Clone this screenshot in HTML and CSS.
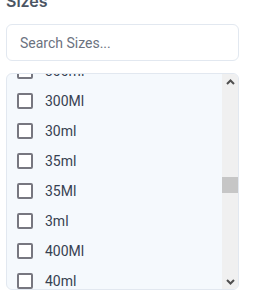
FILE: index.html
```html
<!DOCTYPE html>
<html>
<head>
<meta charset="utf-8">
<link rel="stylesheet" href="styles.css">
</head>
<body>
<div class="panel">
  <h3 class="title">Sizes</h3>
  <input class="search" type="text" placeholder="Search Sizes...">
  <div class="listbox">
    <ul class="list" id="list">
      <li class="row"><span class="box"></span><span class="label">0.5oz</span></li>
      <li class="row"><span class="box"></span><span class="label">1 Gallon</span></li>
      <li class="row"><span class="box"></span><span class="label">1 Liter</span></li>
      <li class="row"><span class="box"></span><span class="label">100g</span></li>
      <li class="row"><span class="box"></span><span class="label">100ml</span></li>
      <li class="row"><span class="box"></span><span class="label">100Ml</span></li>
      <li class="row"><span class="box"></span><span class="label">10g</span></li>
      <li class="row"><span class="box"></span><span class="label">10ml</span></li>
      <li class="row"><span class="box"></span><span class="label">10Ml</span></li>
      <li class="row"><span class="box"></span><span class="label">110ml</span></li>
      <li class="row"><span class="box"></span><span class="label">120ml</span></li>
      <li class="row"><span class="box"></span><span class="label">125ml</span></li>
      <li class="row"><span class="box"></span><span class="label">12ml</span></li>
      <li class="row"><span class="box"></span><span class="label">12oz</span></li>
      <li class="row"><span class="box"></span><span class="label">150g</span></li>
      <li class="row"><span class="box"></span><span class="label">150ml</span></li>
      <li class="row"><span class="box"></span><span class="label">150Ml</span></li>
      <li class="row"><span class="box"></span><span class="label">15ml</span></li>
      <li class="row"><span class="box"></span><span class="label">15Ml</span></li>
      <li class="row"><span class="box"></span><span class="label">16oz</span></li>
      <li class="row"><span class="box"></span><span class="label">180ml</span></li>
      <li class="row"><span class="box"></span><span class="label">1kg</span></li>
      <li class="row"><span class="box"></span><span class="label">1L</span></li>
      <li class="row"><span class="box"></span><span class="label">1oz</span></li>
      <li class="row"><span class="box"></span><span class="label">200g</span></li>
      <li class="row"><span class="box"></span><span class="label">200ml</span></li>
      <li class="row"><span class="box"></span><span class="label">200Ml</span></li>
      <li class="row"><span class="box"></span><span class="label">20ml</span></li>
      <li class="row"><span class="box"></span><span class="label">20Ml</span></li>
      <li class="row"><span class="box"></span><span class="label">250g</span></li>
      <li class="row"><span class="box"></span><span class="label">250ml</span></li>
      <li class="row"><span class="box"></span><span class="label">250Ml</span></li>
      <li class="row"><span class="box"></span><span class="label">25ml</span></li>
      <li class="row"><span class="box"></span><span class="label">2kg</span></li>
      <li class="row"><span class="box"></span><span class="label">2L</span></li>
      <li class="row"><span class="box"></span><span class="label">2ml</span></li>
      <li class="row"><span class="box"></span><span class="label">2oz</span></li>
      <li class="row"><span class="box"></span><span class="label">300g</span></li>
      <li class="row"><span class="box"></span><span class="label">300ml</span></li>
      <li class="row" id="anchor"><span class="box"></span><span class="label">300Ml</span></li>
      <li class="row"><span class="box"></span><span class="label">30ml</span></li>
      <li class="row"><span class="box"></span><span class="label">35ml</span></li>
      <li class="row"><span class="box"></span><span class="label">35Ml</span></li>
      <li class="row"><span class="box"></span><span class="label">3ml</span></li>
      <li class="row"><span class="box"></span><span class="label">400Ml</span></li>
      <li class="row"><span class="box"></span><span class="label">40ml</span></li>
      <li class="row"><span class="box"></span><span class="label">450ml</span></li>
      <li class="row"><span class="box"></span><span class="label">45ml</span></li>
      <li class="row"><span class="box"></span><span class="label">4oz</span></li>
      <li class="row"><span class="box"></span><span class="label">500g</span></li>
      <li class="row"><span class="box"></span><span class="label">500ml</span></li>
      <li class="row"><span class="box"></span><span class="label">500Ml</span></li>
      <li class="row"><span class="box"></span><span class="label">50ml</span></li>
      <li class="row"><span class="box"></span><span class="label">50Ml</span></li>
      <li class="row"><span class="box"></span><span class="label">5L</span></li>
      <li class="row"><span class="box"></span><span class="label">5ml</span></li>
      <li class="row"><span class="box"></span><span class="label">600ml</span></li>
      <li class="row"><span class="box"></span><span class="label">60ml</span></li>
      <li class="row"><span class="box"></span><span class="label">6oz</span></li>
      <li class="row"><span class="box"></span><span class="label">700ml</span></li>
      <li class="row"><span class="box"></span><span class="label">70ml</span></li>
      <li class="row"><span class="box"></span><span class="label">750ml</span></li>
      <li class="row"><span class="box"></span><span class="label">75ml</span></li>
      <li class="row"><span class="box"></span><span class="label">800ml</span></li>
      <li class="row"><span class="box"></span><span class="label">80ml</span></li>
      <li class="row"><span class="box"></span><span class="label">8oz</span></li>
      <li class="row"><span class="box"></span><span class="label">90ml</span></li>
      <li class="row"><span class="box"></span><span class="label">Large</span></li>
      <li class="row"><span class="box"></span><span class="label">Medium</span></li>
      <li class="row"><span class="box"></span><span class="label">Small</span></li>
      <li class="row"><span class="box"></span><span class="label">XL</span></li>
    </ul>
    <div class="scrollbar" aria-hidden="true">
      <div class="sb-btn">
        <svg width="9" height="6" viewBox="0 0 9 6"><path d="M1 5 L4.5 1.5 L8 5" fill="none" stroke="#505050" stroke-width="2"/></svg>
      </div>
      <div class="sb-track">
        <div class="sb-thumb"></div>
      </div>
      <div class="sb-btn">
        <svg width="9" height="6" viewBox="0 0 9 6"><path d="M1 1 L4.5 4.5 L8 1" fill="none" stroke="#505050" stroke-width="2"/></svg>
      </div>
    </div>
  </div>
</div>
<script src="script.js"></script>
</body>
</html>
```

FILE: styles.css
```css
html, body {
  margin: 0;
  padding: 0;
  background: #ffffff;
  font-family: Roboto, "Liberation Sans", sans-serif;
}
.panel {
  display: flex;
  flex-direction: column;
  width: 233px;
  margin: -11px 0 0 6px;
}
.title {
  margin: 0 0 11px 0;
  font-family: Inter, Roboto, sans-serif;
  font-size: 16px;
  line-height: 24px;
  font-weight: 600;
  color: #4b5563;
}
.search {
  box-sizing: border-box;
  height: 37px;
  width: 100%;
  margin: 0;
  padding: 0 13px;
  border: 1px solid #e2e8f0;
  border-radius: 6px;
  background: #ffffff;
  font-family: Roboto, sans-serif;
  font-size: 14px;
  color: #374151;
  outline: none;
}
.search::placeholder {
  color: #6b7280;
}
.listbox {
  box-sizing: border-box;
  display: flex;
  height: 217px;
  margin-top: 12px;
  border: 1px solid #e2e8f0;
  border-radius: 6px;
  background: #f5f9fd;
  overflow: hidden;
}
.list {
  flex: 1;
  margin: 0;
  padding: 0;
  list-style: none;
  overflow: hidden;
}
.scrollbar {
  display: flex;
  flex-direction: column;
  width: 16px;
  flex: none;
  background: #f0f0f0;
}
.sb-btn {
  height: 15px;
  display: flex;
  align-items: center;
  justify-content: center;
  flex: none;
}
.sb-track {
  flex: 1;
}
.sb-thumb {
  margin-top: 88px;
  height: 16px;
  background: #c6c6c6;
}
.row {
  display: flex;
  align-items: center;
  gap: 12px;
  height: 30px;
  padding-left: 10px;
}
.box {
  box-sizing: border-box;
  width: 16px;
  height: 16px;
  border: 2px solid #777780;
  border-radius: 2px;
  background: #ffffff;
  flex: none;
}
.label {
  font-size: 14px;
  color: #374151;
}
```

FILE: script.js
```js
var list = document.getElementById('list');
var anchor = document.getElementById('anchor');
list.scrollTop = anchor.offsetTop - list.offsetTop - 12;
```
